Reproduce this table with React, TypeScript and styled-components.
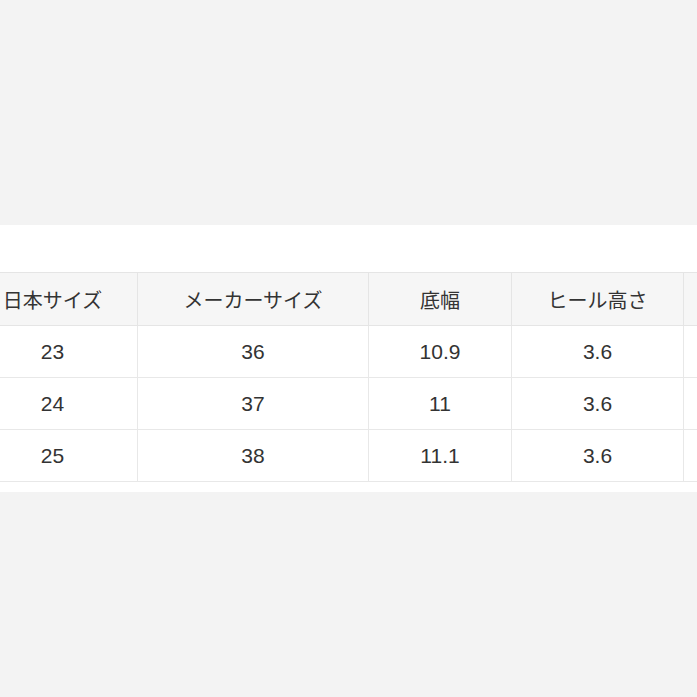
import React from 'react';
import styled, { createGlobalStyle } from 'styled-components';

const GlobalStyle = createGlobalStyle`
  html, body {
    margin: 0;
    padding: 0;
    background: #f3f3f3;
  }
  body {
    font-family: 'Liberation Sans', 'Noto Sans CJK JP', sans-serif;
    color: #333;
  }
`;

const Page = styled.div`
  width: 697px;
  height: 697px;
  overflow: hidden;
  background: #f3f3f3;
  padding-top: 225px;
  box-sizing: border-box;
`;

const Band = styled.div`
  background: #fff;
  padding: 47px 0 10px;
  overflow: hidden;
`;

const Table = styled.table<{ $w: number }>`
  border-collapse: collapse;
  table-layout: fixed;
  width: ${p => p.$w}px;
  min-width: ${p => p.$w}px;
  margin-left: -33px;
`;

const HeadCell = styled.th<{ $w: number }>`
  width: ${p => p.$w}px;
  height: 52px;
  padding: 0;
  background: #f6f6f6;
  border: 1px solid #e5e5e5;
  font-size: 20px;
  font-weight: 400;
  color: #333;
  text-align: center;
  white-space: nowrap;
`;

const Cell = styled.td`
  height: 51px;
  padding: 0;
  border: 1px solid #e8e8e8;
  font-size: 21px;
  color: #333;
  text-align: center;
`;

const columns = [
  { label: '日本サイズ', width: 169 },
  { label: 'メーカーサイズ', width: 230 },
  { label: '底幅', width: 142 },
  { label: 'ヒール高さ', width: 171 },
  { label: '', width: 171 },
];

const rows = [
  ['23', '36', '10.9', '3.6', ''],
  ['24', '37', '11', '3.6', ''],
  ['25', '38', '11.1', '3.6', ''],
];

const tableWidth = columns.reduce((s, c) => s + c.width, 0);

export default function App() {
  return (
    <>
      <GlobalStyle />
      <Page>
        <Band>
          <Table $w={tableWidth}>
            <thead>
              <tr>
                {columns.map((c, i) => (
                  <HeadCell key={i} $w={c.width}>{c.label}</HeadCell>
                ))}
              </tr>
            </thead>
            <tbody>
              {rows.map((r, i) => (
                <tr key={i}>
                  {r.map((v, j) => (
                    <Cell key={j}>{v}</Cell>
                  ))}
                </tr>
              ))}
            </tbody>
          </Table>
        </Band>
      </Page>
    </>
  );
}
